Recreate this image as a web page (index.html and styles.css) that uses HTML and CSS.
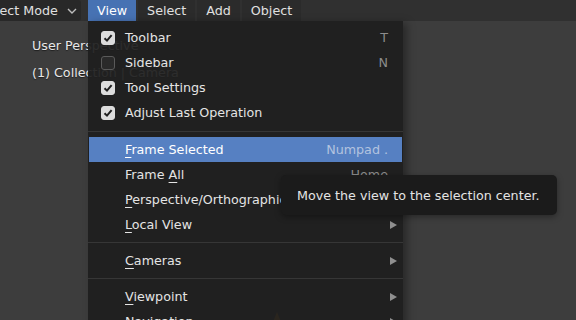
FILE: index.html
```html
<!DOCTYPE html>
<html lang="en">

<head>
  <meta charset="UTF-8">
  <title>View Menu</title>
  <link rel="stylesheet" href="styles.css">
</head>

<body>
  <div class="screen">
    <header class="header">
      <div class="mode-select">
        <span>Object Mode</span>
        <svg class="chevron" width="10" height="6" viewBox="0 0 10 6">
          <path d="M1 1 L5 5 L9 1" fill="none" stroke="#bdbdbd" stroke-width="1.4" />
        </svg>
      </div>
      <nav class="header-menus">
        <span class="header-item active">View</span>
        <span class="header-item">Select</span>
        <span class="header-item">Add</span>
        <span class="header-item">Object</span>
      </nav>
    </header>

    <main class="viewport">
      <div class="overlay-text">
        <p>User Perspective</p>
        <p>(1) Collection | Camera</p>
      </div>
      <span class="camera-mark"></span>

      <div class="menu">
        <div class="menu-row">
          <span class="check on"><svg width="10" height="10" viewBox="0 0 10 10"><path d="M1.5 5.2 L4 7.6 L8.6 2.2" fill="none" stroke="#1e1e1e" stroke-width="2" /></svg></span>
          <span class="label">Toolbar</span>
          <span class="shortcut">T</span>
        </div>
        <div class="menu-row">
          <span class="check"></span>
          <span class="label">Sidebar</span>
          <span class="shortcut">N</span>
        </div>
        <div class="menu-row">
          <span class="check on"><svg width="10" height="10" viewBox="0 0 10 10"><path d="M1.5 5.2 L4 7.6 L8.6 2.2" fill="none" stroke="#1e1e1e" stroke-width="2" /></svg></span>
          <span class="label">Tool Settings</span>
        </div>
        <div class="menu-row">
          <span class="check on"><svg width="10" height="10" viewBox="0 0 10 10"><path d="M1.5 5.2 L4 7.6 L8.6 2.2" fill="none" stroke="#1e1e1e" stroke-width="2" /></svg></span>
          <span class="label">Adjust Last Operation</span>
        </div>

        <div class="separator first"></div>

        <div class="menu-row selected">
          <span class="gutter"></span>
          <span class="label"><u>F</u>rame Selected</span>
          <span class="shortcut">Numpad .</span>
        </div>
        <div class="menu-row">
          <span class="gutter"></span>
          <span class="label">Frame <u>A</u>ll</span>
          <span class="shortcut">Home</span>
        </div>
        <div class="menu-row">
          <span class="gutter"></span>
          <span class="label"><u>P</u>erspective/Orthographic</span>
          <span class="shortcut">Numpad 5</span>
        </div>
        <div class="menu-row">
          <span class="gutter"></span>
          <span class="label"><u>L</u>ocal View</span>
          <span class="arrow"></span>
        </div>

        <div class="separator"></div>

        <div class="menu-row">
          <span class="gutter"></span>
          <span class="label"><u>C</u>ameras</span>
          <span class="arrow"></span>
        </div>

        <div class="separator"></div>

        <div class="menu-row">
          <span class="gutter"></span>
          <span class="label"><u>V</u>iewpoint</span>
          <span class="arrow"></span>
        </div>
        <div class="menu-row">
          <span class="gutter"></span>
          <span class="label"><u>N</u>avigation</span>
          <span class="arrow"></span>
        </div>
      </div>

      <div class="tooltip">Move the view to the selection center.</div>
    </main>
  </div>
</body>

</html>
```

FILE: styles.css
```css
body {
  margin: 0;
  font-family: "DejaVu Sans", sans-serif;
  font-size: 12.7px;
  color: #e6e6e6;
  background-color: #3d3d3d;
  overflow: hidden;
}

.screen {
  width: 576px;
  height: 320px;
  display: flex;
  flex-direction: column;
  overflow: hidden;
}

/* header bar */

.header {
  height: 21px;
  flex-shrink: 0;
  display: flex;
  align-items: stretch;
  background-color: #303030;
  margin-left: -22px;
}

.mode-select {
  width: 103px;
  display: flex;
  align-items: center;
  justify-content: space-between;
  padding: 0 4px 0 0;
  box-sizing: border-box;
  background-color: #282828;
  border-radius: 0 3px 3px 0;
  color: #e0e0e0;
}

.header-menus {
  display: flex;
  margin-left: 7px;
  gap: 2px;
}

.header-item {
  display: flex;
  align-items: center;
  padding: 0 9px;
  background-color: #2b2b2b;
  color: #e0e0e0;
}

.header-item.active {
  background-color: #4772b3;
  color: #ffffff;
}

/* viewport */

.viewport {
  flex: 1;
  position: relative;
  background-color: #3d3d3d;
}

.overlay-text {
  padding: 16px 0 0 32px;
  color: #e8e8e8;
  text-shadow: 0 1px 1px rgba(0, 0, 0, 0.5);
}

.overlay-text p {
  margin: 0 0 10px 0;
  line-height: 17px;
}

.camera-mark {
  position: absolute;
  left: 273px;
  top: 291px;
  width: 0;
  height: 0;
  border-left: 4px solid transparent;
  border-right: 4px solid transparent;
  border-bottom: 10px solid #c88420;
}

/* view menu */

.menu {
  position: absolute;
  left: 88px;
  top: 0;
  width: 315px;
  height: 320px;
  padding-top: 4px;
  box-sizing: border-box;
  background-color: rgba(30, 30, 30, 0.93);
  box-shadow: 4px 2px 8px rgba(0, 0, 0, 0.35);
}

.menu-row {
  height: 25px;
  display: flex;
  align-items: center;
  padding: 0 15px 0 13px;
  color: #e4e4e4;
}

.menu-row.selected {
  background-color: #5680c2;
  color: #ffffff;
  margin: 0 1px;
  padding-left: 12px;
  padding-right: 14px;
}

.menu-row u {
  text-decoration-thickness: 1px;
  text-underline-offset: 3px;
}

.check,
.gutter {
  width: 14px;
  height: 14px;
  margin-right: 10px;
  flex-shrink: 0;
  box-sizing: border-box;
}

.check {
  border: 1px solid #5a5a5a;
  border-radius: 3px;
  background-color: #2a2a2a;
  display: flex;
  align-items: center;
  justify-content: center;
}

.check.on {
  border-color: #dcdcdc;
  background-color: #dcdcdc;
}

.label {
  flex: 1;
  white-space: nowrap;
}

.shortcut {
  color: #8c8c8c;
}

.selected .shortcut {
  color: #b3c3df;
}

.arrow {
  width: 0;
  height: 0;
  margin-right: -9px;
  border-top: 4px solid transparent;
  border-bottom: 4px solid transparent;
  border-left: 7px solid #8f8f8f;
}

.separator {
  height: 11px;
  display: flex;
  align-items: center;
}

.separator.first {
  height: 12px;
}

.separator::after {
  content: "";
  flex: 1;
  height: 1px;
  background-color: #363636;
}

/* tooltip */

.tooltip {
  position: absolute;
  left: 281px;
  top: 154px;
  width: 276px;
  height: 40px;
  box-sizing: border-box;
  padding: 0 0 0 16px;
  display: flex;
  align-items: center;
  background-color: #1b1b1b;
  border-radius: 5px;
  color: #e4e4e4;
  white-space: nowrap;
  box-shadow: 0 2px 6px rgba(0, 0, 0, 0.35);
}
```
